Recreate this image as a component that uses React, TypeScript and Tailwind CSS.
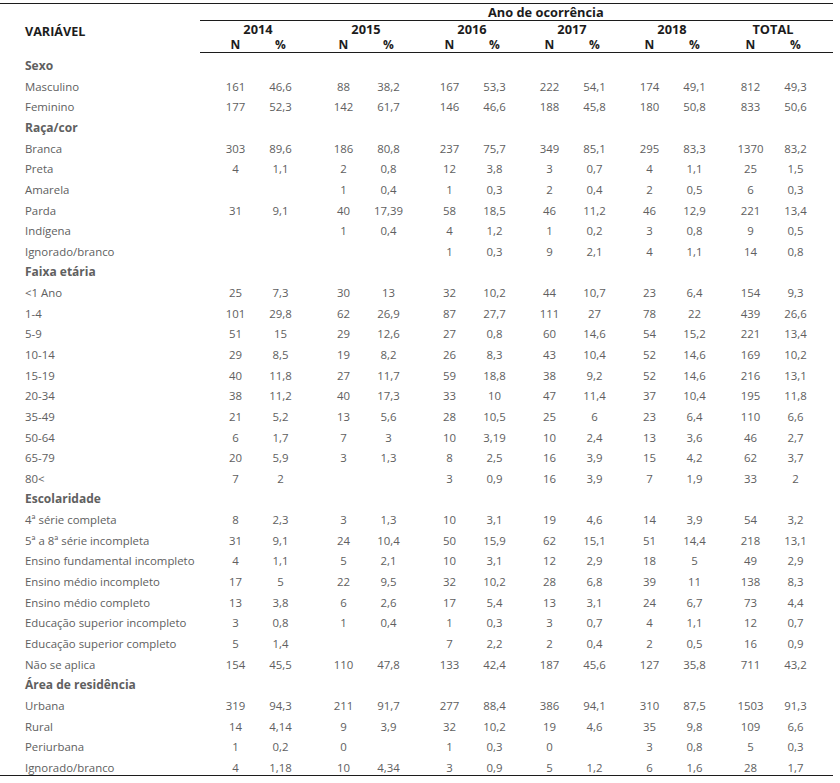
import React from "react";

type Row = { section?: string; label?: string; v?: string[] };

const rows: Row[] = [
  { section: "Sexo" },
  { label: "Masculino", v: ["161", "46,6", "88", "38,2", "167", "53,3", "222", "54,1", "174", "49,1", "812", "49,3"] },
  { label: "Feminino", v: ["177", "52,3", "142", "61,7", "146", "46,6", "188", "45,8", "180", "50,8", "833", "50,6"] },
  { section: "Raça/cor" },
  { label: "Branca", v: ["303", "89,6", "186", "80,8", "237", "75,7", "349", "85,1", "295", "83,3", "1370", "83,2"] },
  { label: "Preta", v: ["4", "1,1", "2", "0,8", "12", "3,8", "3", "0,7", "4", "1,1", "25", "1,5"] },
  { label: "Amarela", v: ["", "", "1", "0,4", "1", "0,3", "2", "0,4", "2", "0,5", "6", "0,3"] },
  { label: "Parda", v: ["31", "9,1", "40", "17,39", "58", "18,5", "46", "11,2", "46", "12,9", "221", "13,4"] },
  { label: "Indígena", v: ["", "", "1", "0,4", "4", "1,2", "1", "0,2", "3", "0,8", "9", "0,5"] },
  { label: "Ignorado/branco", v: ["", "", "", "", "1", "0,3", "9", "2,1", "4", "1,1", "14", "0,8"] },
  { section: "Faixa etária" },
  { label: "<1 Ano", v: ["25", "7,3", "30", "13", "32", "10,2", "44", "10,7", "23", "6,4", "154", "9,3"] },
  { label: "1-4", v: ["101", "29,8", "62", "26,9", "87", "27,7", "111", "27", "78", "22", "439", "26,6"] },
  { label: "5-9", v: ["51", "15", "29", "12,6", "27", "0,8", "60", "14,6", "54", "15,2", "221", "13,4"] },
  { label: "10-14", v: ["29", "8,5", "19", "8,2", "26", "8,3", "43", "10,4", "52", "14,6", "169", "10,2"] },
  { label: "15-19", v: ["40", "11,8", "27", "11,7", "59", "18,8", "38", "9,2", "52", "14,6", "216", "13,1"] },
  { label: "20-34", v: ["38", "11,2", "40", "17,3", "33", "10", "47", "11,4", "37", "10,4", "195", "11,8"] },
  { label: "35-49", v: ["21", "5,2", "13", "5,6", "28", "10,5", "25", "6", "23", "6,4", "110", "6,6"] },
  { label: "50-64", v: ["6", "1,7", "7", "3", "10", "3,19", "10", "2,4", "13", "3,6", "46", "2,7"] },
  { label: "65-79", v: ["20", "5,9", "3", "1,3", "8", "2,5", "16", "3,9", "15", "4,2", "62", "3,7"] },
  { label: "80<", v: ["7", "2", "", "", "3", "0,9", "16", "3,9", "7", "1,9", "33", "2"] },
  { section: "Escolaridade" },
  { label: "4ª série completa", v: ["8", "2,3", "3", "1,3", "10", "3,1", "19", "4,6", "14", "3,9", "54", "3,2"] },
  { label: "5ª a 8ª série incompleta", v: ["31", "9,1", "24", "10,4", "50", "15,9", "62", "15,1", "51", "14,4", "218", "13,1"] },
  { label: "Ensino fundamental incompleto", v: ["4", "1,1", "5", "2,1", "10", "3,1", "12", "2,9", "18", "5", "49", "2,9"] },
  { label: "Ensino médio incompleto", v: ["17", "5", "22", "9,5", "32", "10,2", "28", "6,8", "39", "11", "138", "8,3"] },
  { label: "Ensino médio completo", v: ["13", "3,8", "6", "2,6", "17", "5,4", "13", "3,1", "24", "6,7", "73", "4,4"] },
  { label: "Educação superior incompleto", v: ["3", "0,8", "1", "0,4", "1", "0,3", "3", "0,7", "4", "1,1", "12", "0,7"] },
  { label: "Educação superior completo", v: ["5", "1,4", "", "", "7", "2,2", "2", "0,4", "2", "0,5", "16", "0,9"] },
  { label: "Não se aplica", v: ["154", "45,5", "110", "47,8", "133", "42,4", "187", "45,6", "127", "35,8", "711", "43,2"] },
  { section: "Área de residência" },
  { label: "Urbana", v: ["319", "94,3", "211", "91,7", "277", "88,4", "386", "94,1", "310", "87,5", "1503", "91,3"] },
  { label: "Rural", v: ["14", "4,14", "9", "3,9", "32", "10,2", "19", "4,6", "35", "9,8", "109", "6,6"] },
  { label: "Periurbana", v: ["1", "0,2", "0", "", "1", "0,3", "0", "", "3", "0,8", "5", "0,3"] },
  { label: "Ignorado/branco", v: ["4", "1,18", "10", "4,34", "3", "0,9", "5", "1,2", "6", "1,6", "28", "1,7"] },
];

const gaps = ["ml-[13px]", "ml-[18px]", "ml-[16px]", "ml-[10px]", "ml-[10px]", "ml-[11px]"];
const years = ["2014", "2015", "2016", "2017", "2018", "TOTAL"];

function Groups({ v }: { v: string[] }) {
  return (
    <div className="flex">
      {years.map((y, i) => (
        <div key={y} className={`flex ${gaps[i]}`}>
          <div className="w-[45px] text-center">{v[i * 2]}</div>
          <div className="w-[45px] text-center">{v[i * 2 + 1]}</div>
        </div>
      ))}
    </div>
  );
}

export default function App() {
  return (
    <div className="w-[840px] h-[783px] bg-white text-[11.4px] leading-none text-[#606060] font-['Open_Sans','Noto_Sans',sans-serif] pt-[3px]">
      <div className="w-[833px] border-t border-[#1c1c1c]">
        <div className="flex">
          <div className="w-[200px] pl-[25px] pt-[8px] flex items-center font-bold text-[12.6px] text-[#1c1c1c]">VARIÁVEL</div>
          <div className="flex-1 text-[#1c1c1c] font-bold">
            <div className="h-[17px] flex items-center pl-[288px] text-[12.8px] border-b border-[#1c1c1c]">Ano de ocorrência</div>
            <div className="h-[16px] flex items-center pt-[1px] text-[12.8px]">
              {years.map((y, i) => (
                <div key={y} className={`w-[90px] text-center ${gaps[i]}`}>{y}</div>
              ))}
            </div>
            <div className="h-[16px] flex items-center pt-[1px] text-[12px] border-b border-[#1c1c1c]">
              {years.map((y, i) => (
                <div key={y} className={`flex ${gaps[i]}`}>
                  <div className="w-[45px] text-center">N</div>
                  <div className="w-[45px] text-center">%</div>
                </div>
              ))}
            </div>
          </div>
        </div>
        <div className="border-b border-[#1c1c1c]">
          {rows.map((r, idx) => (
            <div key={idx} className="h-[20.65px] flex items-center pt-[5px]">
              {r.section ? (
                <div className="pl-[25px] font-bold text-[12px]">{r.section}</div>
              ) : (
                <>
                  <div className="w-[200px] pl-[25px] whitespace-nowrap">{r.label}</div>
                  <Groups v={r.v!} />
                </>
              )}
            </div>
          ))}
        </div>
      </div>
    </div>
  );
}
